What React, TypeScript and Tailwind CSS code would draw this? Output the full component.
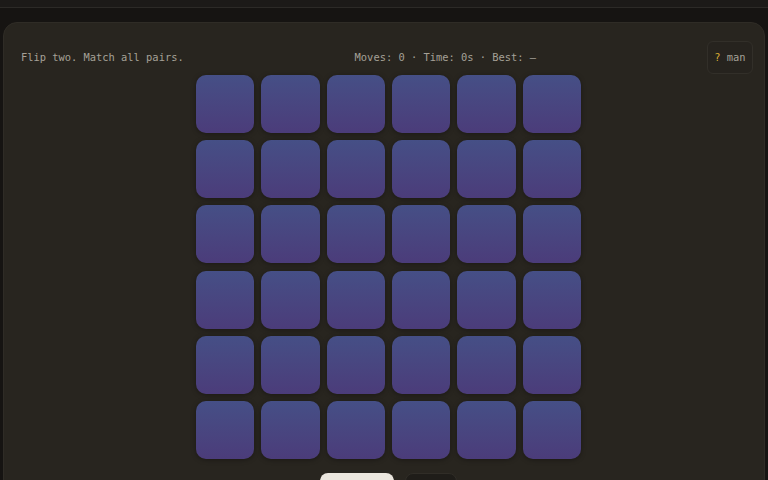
import React from 'react';

const tiles = Array.from({ length: 36 }, (_, i) => i);

export default function App() {
  return (
    <div className="w-[768px] h-[480px] overflow-hidden bg-[#161412] font-['DejaVu_Sans_Mono',monospace]">
      {/* top chrome */}
      <div className="h-[8px] bg-[#1c1a18] border-b border-[#2c2a27]" />
      <div className="h-[14px]" />

      {/* board panel */}
      <div className="mx-[3px] h-[480px] rounded-t-[14px] border border-[#2f2c26] bg-[#28251f] pl-[17px] pr-[11px] pt-[18px]">
        {/* header */}
        <div className="flex items-center justify-between text-[10.4px] text-[#a5a197]">
          <span>Flip two. Match all pairs.</span>
          <span>Moves: 0 · Time: 0s · Best: —</span>
          <button className="h-[33px] w-[46px] rounded-[6px] border border-[#322f29] bg-[#26231e] text-[#a5a197]">
            <span className="text-[#d9ab33]">?</span> man
          </button>
        </div>

        {/* cards */}
        <div className="mt-[1px] flex justify-center pl-[3px]">
          <div className="grid w-[385px] grid-cols-6 gap-x-[7px] gap-y-[7.2px]">
            {tiles.map((t) => (
              <div
                key={t}
                className="h-[58px] rounded-[10px] bg-gradient-to-b from-[#454f86] to-[#4b3c7a] shadow-[0_1px_5px_rgba(0,0,0,0.35)]"
              />
            ))}
          </div>
        </div>

        {/* actions */}
        <div className="mt-[14px] flex justify-center gap-[11px] pl-[3px]">
          <button aria-label="Restart" className="h-[30px] w-[74px] rounded-[8px] bg-[#ebe7df]" />
          <button aria-label="Hint" className="h-[30px] w-[52px] rounded-[8px] border border-[#302d27] bg-[#1f1d19]" />
        </div>
      </div>
    </div>
  );
}
